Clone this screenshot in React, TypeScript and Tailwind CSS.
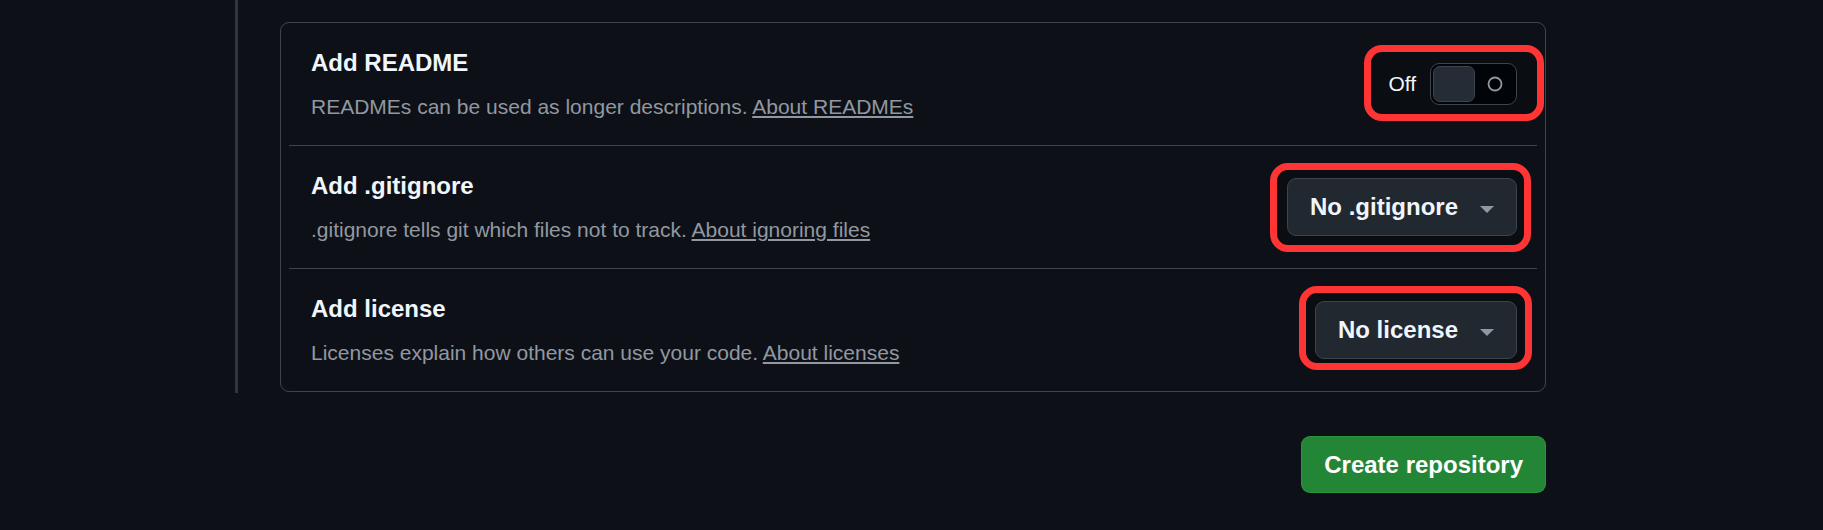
import type { ReactNode } from 'react'

function Caret() {
  return (
    <svg width="14" height="7" viewBox="0 0 14 7" className="mt-1 shrink-0">
      <polygon points="0,0 14,0 7,7" fill="#9198a1" />
    </svg>
  )
}

function Marked({ children, ring }: { children: ReactNode; ring: string }) {
  return (
    <div className="relative isolate">
      <div className={`pointer-events-none absolute -z-10 rounded-[18px] border-[7px] border-[#ff3535] bg-[#0a0d11] ${ring}`} />
      {children}
    </div>
  )
}

function SelectButton({ label }: { label: string }) {
  return (
    <button className="flex h-[58px] items-center gap-[22px] rounded-[9px] border border-[#3d444d] bg-[#212830] px-[22px] text-[24px] font-bold text-[#f0f6fc]">
      <span>{label}</span>
      <Caret />
    </button>
  )
}

function Row({ title, desc, link, first, children }: {
  title: string
  desc: string
  link: string
  first?: boolean
  children: ReactNode
}) {
  return (
    <div className={`mx-2 flex h-[122px] items-center justify-between pl-[22px] pr-[20px] ${first ? '' : 'h-[123px] border-t border-[#3d444d]'}`}>
      <div>
        <h3 className="text-[24px] font-bold leading-[36px] text-[#f0f6fc]">{title}</h3>
        <p className="mt-[10px] text-[21px] leading-[31.5px] text-[#9198a1]">
          {desc} <a className="underline">{link}</a>
        </p>
      </div>
      {children}
    </div>
  )
}

export default function App() {
  return (
    <div className="min-h-screen bg-[#0d1117] font-['Liberation_Sans',Arial,sans-serif]">
      <div className="ml-[235px] w-[1311px]">
        <div className="border-l-[3px] border-[#30363d] pb-px pl-[42px] pt-[22px]">
          <div className="rounded-[9px] border border-[#3d444d]">
            <Row
              first
              title="Add README"
              desc="READMEs can be used as longer descriptions."
              link="About READMEs"
            >
              <Marked ring="-left-[24px] -right-[27px] -top-[18px] -bottom-[16px]">
                <div className="flex items-center gap-3.5">
                  <span className="text-[21px] text-[#f0f6fc]">Off</span>
                  <div className="flex h-[42px] w-[87px] items-center rounded-[9px] border border-[#3d444d] bg-[#010409] p-[2px]">
                    <div className="h-full w-[42px] rounded-[7px] border border-[#3d444d] bg-[#262c36]" />
                    <svg width="16" height="16" viewBox="0 0 16 16" className="ml-[12px]">
                      <circle cx="8" cy="8" r="6.5" fill="none" stroke="#9198a1" strokeWidth="1.8" />
                    </svg>
                  </div>
                </div>
              </Marked>
            </Row>
            <Row
              title="Add .gitignore"
              desc=".gitignore tells git which files not to track."
              link="About ignoring files"
            >
              <Marked ring="-left-[17px] -right-[14px] -top-[15px] -bottom-[16px]">
                <SelectButton label="No .gitignore" />
              </Marked>
            </Row>
            <Row
              title="Add license"
              desc="Licenses explain how others can use your code."
              link="About licenses"
            >
              <Marked ring="-left-[16px] -right-[15px] -top-[15px] -bottom-[11px]">
                <SelectButton label="No license" />
              </Marked>
            </Row>
          </div>
        </div>
        <div className="mt-[43px] flex justify-end">
          <button className="h-[57px] rounded-[9px] border border-[#2ea043]/60 bg-[#238636] px-[22px] text-[24px] font-bold text-white">
            Create repository
          </button>
        </div>
      </div>
    </div>
  )
}
